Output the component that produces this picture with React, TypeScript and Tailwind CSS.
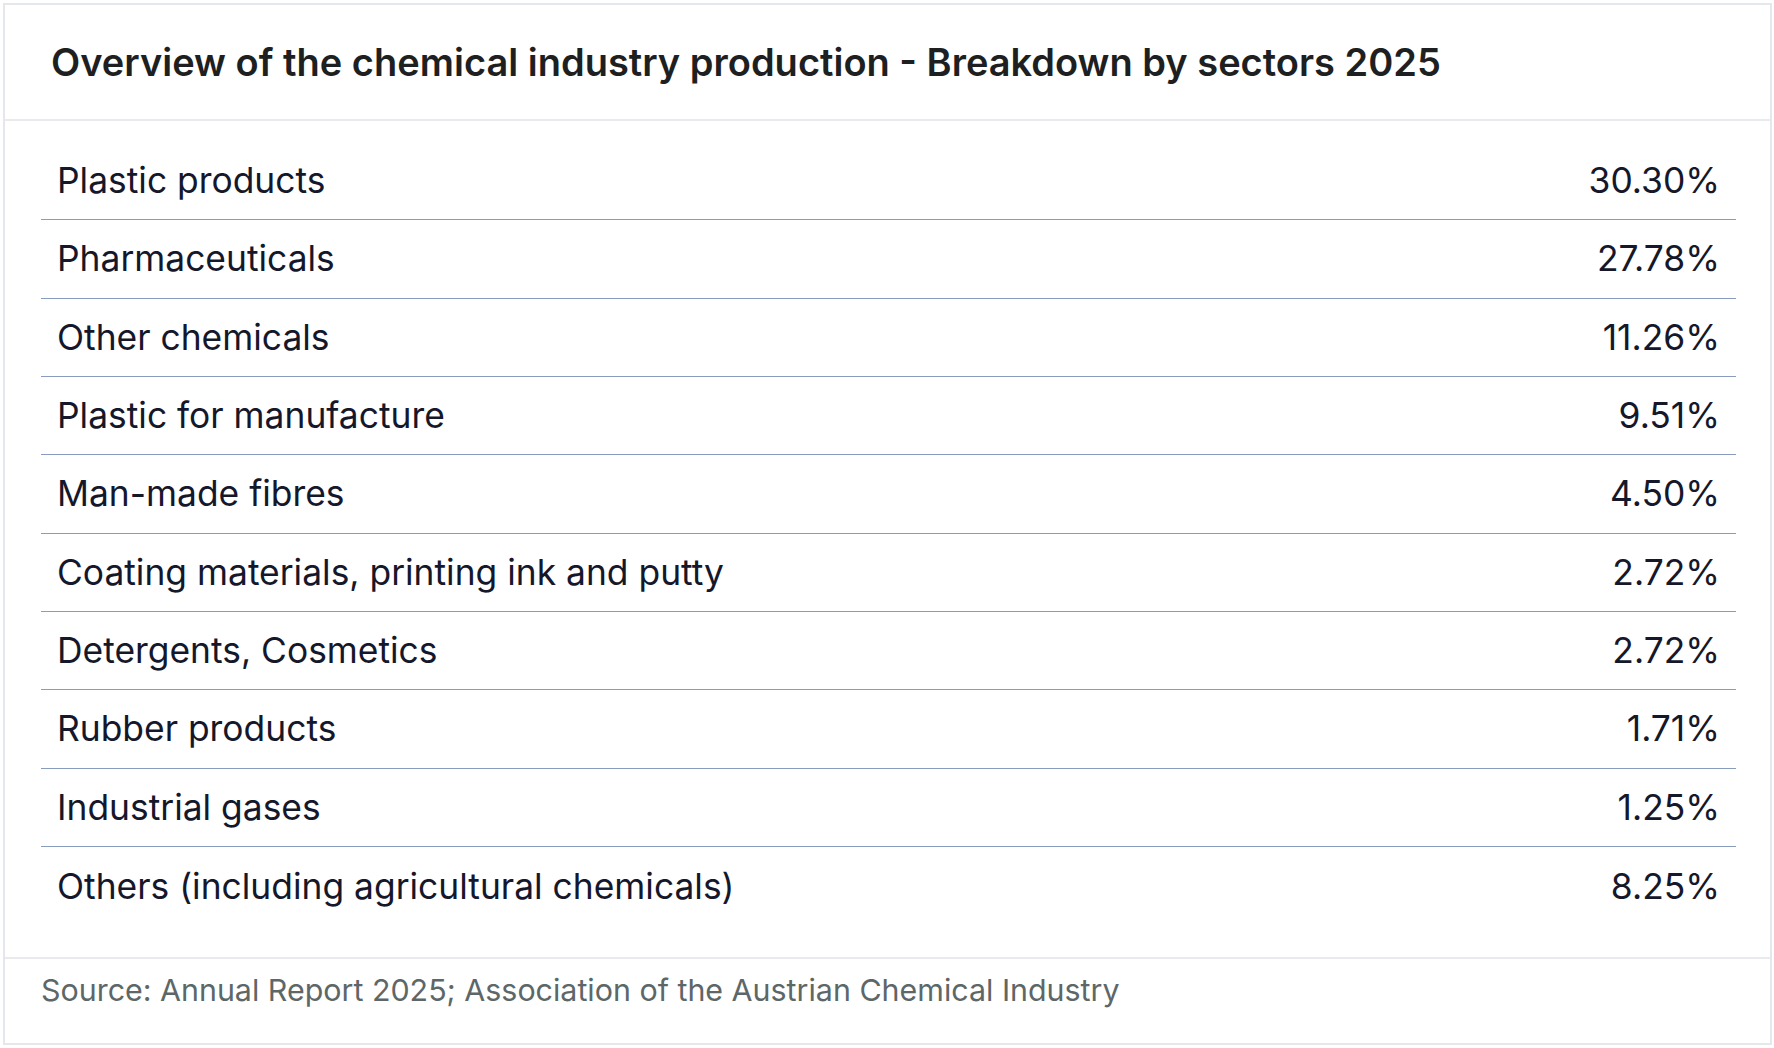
const rows: [string, string][] = [
  ["Plastic products", "30.30%"],
  ["Pharmaceuticals", "27.78%"],
  ["Other chemicals", "11.26%"],
  ["Plastic for manufacture", "9.51%"],
  ["Man-made fibres", "4.50%"],
  ["Coating materials, printing ink and putty", "2.72%"],
  ["Detergents, Cosmetics", "2.72%"],
  ["Rubber products", "1.71%"],
  ["Industrial gases", "1.25%"],
  ["Others (including agricultural chemicals)", "8.25%"],
];

export default function App() {
  return (
    <div className="h-[1048px] w-full bg-white p-[3px] pr-[2px] font-['Inter',sans-serif]">
      <div className="flex h-full flex-col border-2 border-[#e4e7eb] bg-white">
        <div className="flex h-[116px] items-center border-b-2 border-[#e8eaed] px-[46px]">
          <h1 className="text-[38px] font-semibold text-[#1e1f21]">
            Overview of the chemical industry production - Breakdown by sectors 2025
          </h1>
        </div>

        <div className="pt-[21px] pr-[34px] pb-8 pl-9">
          {rows.map(([label, value], i) => (
            <div
              key={label}
              className={`flex h-[78.33px] items-center justify-between px-4 text-[35.4px] text-[#15172b] ${
                i < rows.length - 1 ? "border-b border-[#8a9cbd]" : ""
              }`}
            >
              <span>{label}</span>
              <span>{value}</span>
            </div>
          ))}
        </div>

        <div className="flex-1 border-t-2 border-[#e8eaed] px-9 pt-[9px]">
          <p className="text-[30.4px] text-[#5d6768]">
            Source: Annual Report 2025; Association of the Austrian Chemical Industry
          </p>
        </div>
      </div>
    </div>
  );
}
